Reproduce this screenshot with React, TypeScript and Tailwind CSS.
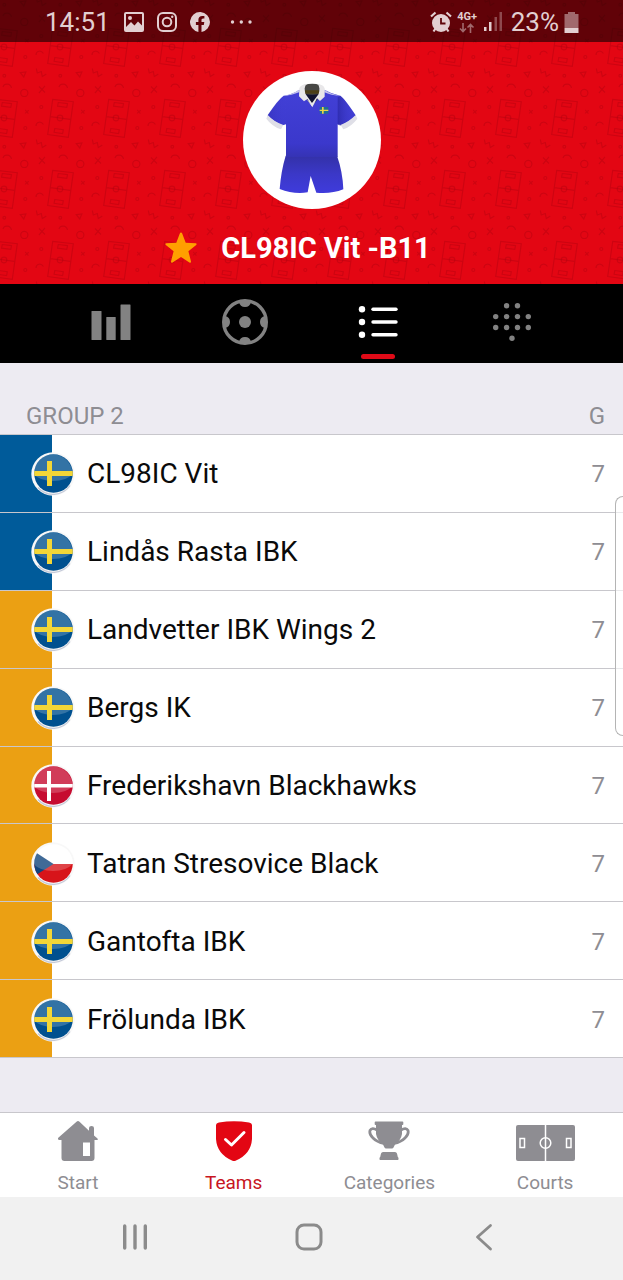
import React from 'react'

type Country = 'se' | 'dk' | 'cz'

const teams: { name: string; country: Country; games: number; qualified: boolean }[] = [
  { name: 'CL98IC Vit', country: 'se', games: 7, qualified: true },
  { name: 'Lindås Rasta IBK', country: 'se', games: 7, qualified: true },
  { name: 'Landvetter IBK Wings 2', country: 'se', games: 7, qualified: false },
  { name: 'Bergs IK', country: 'se', games: 7, qualified: false },
  { name: 'Frederikshavn Blackhawks', country: 'dk', games: 7, qualified: false },
  { name: 'Tatran Stresovice Black', country: 'cz', games: 7, qualified: false },
  { name: 'Gantofta IBK', country: 'se', games: 7, qualified: false },
  { name: 'Frölunda IBK', country: 'se', games: 7, qualified: false },
]

/* Header pattern, one tile is 56 x 71 */
const Doodles = () => (
  <g>
    <path d="M6.7 2.3 27.3 4.7 22.3 40.3 1.7 37.5zM4.3 19.7l20 2.6M12.3 5.5 21.5 6.600l-.7 3.700-9.200-1.100zM8.800 31.500l8.500 1.200-.7 3.800-8.500-1.200z" />
    <circle cx="14" cy="21" r="2.8" />
    <path d="m35.2 12.9 3.2 3.700M38.7 13.2l-3.700 3.2" />
    <circle cx="51.3" cy="10" r="1.5" />
    <path d="M46 29c0-4 5-5.5 7.400-1.500" />
    <circle cx="35.3" cy="31" r="1.5" />
    <path d="m30.3 46.7 5.500-.7-2 5z" />
    <path d="m46.3 42.5 1 4.500 4-1.500 1 5 4-2.500" />
    <circle cx="14.3" cy="49.7" r="1.4" />
    <path d="m49 60.500 6 6M55 59.800l-6 7.200" />
    <circle cx="34.3" cy="67" r="3.6" />
    <path d="M13 61c1-4 7.500-4 8.500 1" />
  </g>
)

const HeaderPattern = () => (
  <svg className="absolute inset-0 h-full w-full" aria-hidden="true">
    <defs>
      <pattern id="doodles" x="46" y="26" width="56" height="71" patternUnits="userSpaceOnUse">
        <g fill="none" stroke="#a8000c" strokeOpacity="0.36" strokeWidth="1.2">
          <Doodles />
          <g transform="translate(-56 0)">
            <Doodles />
          </g>
        </g>
      </pattern>
    </defs>
    <rect width="100%" height="100%" fill="url(#doodles)" />
  </svg>
)

const StatusBar = () => (
  <div className="relative flex h-[42px] items-center justify-between bg-[#0a0000]/60 pt-0.5 pr-11 pl-[45px] text-[#e2cfd1]">
    <div className="flex items-center">
      <span className="w-[65px] text-[26px] leading-8">14:51</span>
      <svg className="ml-[14px] h-5 w-5" viewBox="0 0 20 20" fill="currentColor" fillRule="evenodd">
        <path d="M2 0h16a2 2 0 0 1 2 2v16a2 2 0 0 1-2 2H2a2 2 0 0 1-2-2V2a2 2 0 0 1 2-2zm0 2v13l5-5 3.500 3.500L14 9.500l4 4V2zM6 4a2 2 0 1 1 0 4 2 2 0 0 1 0-4z" />
      </svg>
      <svg className="ml-[13px] h-5 w-5" viewBox="0 0 20 20" fill="none" stroke="currentColor" strokeWidth="2">
        <rect x="1" y="1" width="18" height="18" rx="5" />
        <circle cx="10" cy="10" r="4.3" />
        <circle cx="15.2" cy="4.8" r="1.2" fill="currentColor" stroke="none" />
      </svg>
      <svg className="ml-[13px] h-5 w-5" viewBox="0 0 20 20" fill="currentColor">
        <path d="M20 10A10 10 0 1 0 8.400 19.900v-7H5.900V10h2.500V7.800c0-2.500 1.500-3.900 3.800-3.900 1.100 0 2.200.2 2.200.2v2.500h-1.200c-1.300 0-1.700.8-1.700 1.600V10h2.800l-.5 2.900h-2.300v7A10 10 0 0 0 20 10z" />
      </svg>
      <svg className="ml-5 h-1 w-[23px]" viewBox="0 0 23 4" fill="currentColor">
        <circle cx="2.5" cy="2" r="1.7" />
        <circle cx="11.3" cy="2" r="1.7" />
        <circle cx="20" cy="2" r="1.7" />
      </svg>
    </div>
    <div className="flex items-center">
      <svg className="h-[22px] w-[22px]" viewBox="0 0 22 22" fill="none" stroke="currentColor" strokeWidth="2.2">
        <circle cx="11" cy="12" r="9" fill="currentColor" stroke="none" />
        <path d="M1 5.500 5.500 1.500M21 5.500 16.500 1.500M5.500 17.500 3.500 20.500M16.500 17.500l2 3" />
        <path d="M11 7v5.500h4.500" stroke="#5f0509" strokeWidth="1.8" />
      </svg>
      <span className="ml-1 flex w-[23px] flex-col items-center text-[11px] leading-3 font-bold">
        4G+
        <svg className="h-[10px] w-4 opacity-50" viewBox="0 0 16 10" fill="none" stroke="currentColor" strokeWidth="1.6">
          <path d="M4 0v8.500M1 5.500l3 3 3-3M11.500 10V1.500M8.500 4.500l3-3 3 3" />
        </svg>
      </span>
      <svg className="ml-1 h-5 w-5" viewBox="0 0 20 20" fill="currentColor">
        <path d="M1 15h2.500v4H1zM6 10h2.500v9H6z" />
        <path d="M11.500 5H14v14h-2.500zM16.500 0H19v19h-2.500z" opacity="0.35" />
      </svg>
      <span className="ml-2 text-[26px] leading-8">23%</span>
      <svg className="ml-[5px] h-[21px] w-[15px]" viewBox="0 0 15 21" fill="currentColor">
        <path d="M4 0h7v2h3.500v14H.5V2H4z" opacity="0.5" />
        <path d="M.5 16h14v5H.5z" />
      </svg>
    </div>
  </div>
)

const Kit = () => (
  <svg className="h-[138px] w-[138px]" viewBox="38 34 414 414" role="img" aria-label="Team kit">
    <defs>
      <linearGradient id="shirt" x1="0" y1="0" x2="0" y2="1">
        <stop offset="0" stopColor="#4240d6" />
        <stop offset="0.8" stopColor="#3b38cc" />
        <stop offset="1" stopColor="#3533b4" />
      </linearGradient>
      <linearGradient id="shorts" x1="0" y1="0" x2="0" y2="1">
        <stop offset="0" stopColor="#3331a8" />
        <stop offset="0.5" stopColor="#3b38c8" />
        <stop offset="1" stopColor="#3f3bdc" />
      </linearGradient>
      <linearGradient id="sleeve" x1="0" y1="0" x2="1" y2="0">
        <stop offset="0" stopColor="#25239d" stopOpacity="0.6" />
        <stop offset="1" stopColor="#4744dc" stopOpacity="0" />
      </linearGradient>
    </defs>
    <circle cx="245" cy="241" r="207" fill="#fff" />
    <path d="M166 288h154q17 48 19 101-38 15-81 10l-17-50-9 49q-43 6-84-10 4-53 18-100z" fill="url(#shorts)" />
    <path d="M160 108q28-4 47-18l38 50 37-50q20 12 48 18 12 8 47 60-20 19-45 28l-10-2v98H167v-98l-10 3q-26-9-45-30 32-48 48-59z" fill="url(#shirt)" />
    <path d="M322 113v82l10 3q25-11 44-32-34-50-46-57z" fill="url(#sleeve)" />
    <path d="m167 113 2 82-12 3q-26-12-45-32 34-50 46-57z" fill="url(#sleeve)" opacity="0.45" />
    <path d="M112 166q18 20 47 30l-7 13q-26-8-44-32zM376 166q-20 20-45 30l8 13q25-9 42-32z" fill="#dfdfe7" />
    <path d="M156 109q30-5 50-19v8q-20 9-50 11zM334 109q-32-5-52-19v8q18 9 52 11z" fill="#c3c2eb" />
    <path d="m222 85 4 30 20 23 23-28V85z" fill="#10112e" />
    <path d="M222 76q24-7 47 0l-2 27q-20 5-44 0z" fill="#474745" />
    <path d="M223 92h44v10h-43z" fill="#4b3f16" />
    <path d="M207 85q6-11 23-12-11 8-5 29l20 28 20-27q6-22-4-30 18 1 22 13v25l-14 13-9-8-14 27-15-25-10 7-15-15z" fill="#e8e7e9" />
    <path d="M268 142h26v20h-26z" fill="#1f6f92" />
    <path d="M275 142h5v20h-5zM268 150h26v4h-26z" fill="#ecd545" />
  </svg>
)

const shine = 'M2.500 22a19.500 19.500 0 0 1 39 0q-6 7-19.500 7T2.500 22z'

const Flag = ({ country }: { country: Country }) => (
  <svg className="relative -ml-[21px] h-11 w-11 shrink-0" viewBox="0 0 44 44" role="img" aria-label={country}>
    <defs>
      <clipPath id="round">
        <circle cx="22.5" cy="21.5" r="19.3" />
      </clipPath>
    </defs>
    <circle cx="22" cy="22" r="21.7" fill="#f8f8f8" />
    <path d="M7 35.500a20.300 20.300 0 0 0 32-2" fill="none" stroke="#c3c9d8" strokeWidth="1.3" />
    <g clipPath="url(#round)">
      {country === 'se' && (
        <>
          <path d="M2 2h41v41H2z" fill="#00508f" />
          <path d={shine} fill="#fff" opacity="0.2" />
          <path d="M16 9h5v25h-5zM2 19h41v5H2z" fill="#f3d637" />
        </>
      )}
      {country === 'dk' && (
        <>
          <path d="M2 2h41v41H2z" fill="#c60c30" />
          <path d={shine} fill="#fff" opacity="0.2" />
          <path d="M16 7h4v30h-4zM2 20h41v3.500H2z" fill="#fff" />
        </>
      )}
      {country === 'cz' && (
        <>
          <path d="M2 2h41v20H2z" fill="#fff" />
          <path d="M2 22h41v21H2z" fill="#d7141a" />
          <path d="M2 8.500 22.500 22 2 35z" fill="#11457e" />
          <path d={shine} fill="#fff" opacity="0.2" />
        </>
      )}
    </g>
  </svg>
)

const BarsIcon = () => (
  <svg className="h-9 w-10" viewBox="0 0 40 36" fill="currentColor">
    <rect x="0.5" y="7" width="10" height="29" rx="0.5" />
    <rect x="15.3" y="13" width="9.4" height="23" rx="0.5" />
    <rect x="29.5" y="0.5" width="10" height="35.5" rx="0.5" />
  </svg>
)

const BallIcon = () => (
  <svg className="h-[46px] w-[46px]" viewBox="0 0 46 46" fill="currentColor">
    <circle cx="23" cy="23" r="21.3" fill="none" stroke="currentColor" strokeWidth="3.4" />
    <circle cx="23" cy="23" r="6" />
    <path d="M17 3q1 5 6 5t6-5zM17 43q1-5 6-5t6 5zM3 17q5 1 5 6t-5 6zM43 17q-5 1-5 6t5 6z" />
  </svg>
)

const ListIcon = () => (
  <svg className="h-8 w-10" viewBox="0 0 40 32" fill="currentColor">
    {[3.2, 16, 28.8].map((y) => (
      <g key={y}>
        <circle cx="4" cy={y} r="3.2" />
        <path d={`M15 ${y}H38`} stroke="currentColor" strokeWidth="3.4" strokeLinecap="round" />
      </g>
    ))}
  </svg>
)

const dots = [
  [13.6, 2.7], [24.5, 2.7],
  [2.7, 13.6], [13.6, 13.6], [24.5, 13.6], [35.3, 13.6],
  [2.7, 24.5], [13.6, 24.5], [24.5, 24.5], [35.3, 24.5],
  [19, 35.3],
]

const DotsIcon = () => (
  <svg className="h-[38px] w-[38px]" viewBox="0 0 38 38" fill="currentColor">
    {dots.map(([x, y]) => (
      <circle key={`${x}-${y}`} cx={x} cy={y} r="2.7" />
    ))}
  </svg>
)

const HomeIcon = () => (
  <svg className="h-10 w-10" viewBox="0 0 40 40" fill="currentColor">
    <path fillRule="evenodd" d="M18.500.8q1.500-1.400 3 0l9.500 9V7q0-2 2.500-2t2.500 2v7.500l3.500 3q1 2-1.500 1.500h-1.500v18q0 3-3 3H6.500q-3 0-3-3V19H1.500q-2 0-1.500-2zM25 21.500V35h7V21.500z" />
  </svg>
)

const ShieldIcon = () => (
  <svg className="h-10 w-9" viewBox="0 0 36 40">
    <path d="M3 1.500Q18-1 33 1.500q3 .5 3 3V18q-1 15-16 21.500-2 1-4 0Q1 33 0 18V4.500q0-2.500 3-3z" fill="#e30613" />
    <path d="m9.500 18.500 6 5.500L28 11.500" fill="none" stroke="#fff" strokeWidth="3" strokeLinecap="round" strokeLinejoin="round" />
  </svg>
)

const TrophyIcon = () => (
  <svg className="h-10 w-[42px]" viewBox="0 0 42 40" fill="currentColor">
    <path d="M7.500.5h27q.8 0 .8.800v2q0 .8-.8.800H34v9q-1 6-7 10.500l-1.500 3q-.5.900-1.500.900h-6q-1 0-1.500-.900l-1.500-3Q9 19 8 13.100v-9h-.5q-.8 0-.8-.8v-2q0-.8.8-.8zM15 31h12q1.500 0 2 1.500l.8 3.500q.7.300.7 1.300v1q0 .7-.7.700H12.200q-.7 0-.7-.7v-1q0-1 .7-1.300l.8-3.500q.5-1.500 2-1.500z" />
    <path d="M9 9Q4 6 2 9.500q-1 4 3 7.500 4 4 11 5.500M33 9q5-3 7 .5 1 4-3 7.500-4 4-11 5.500" fill="none" stroke="currentColor" strokeWidth="2.8" />
  </svg>
)

const CourtIcon = () => (
  <svg className="h-9 w-[59px]" viewBox="0 0 59 36">
    <rect width="59" height="36" rx="2" fill="currentColor" />
    <g fill="none" stroke="#fff" strokeWidth="1.5">
      <path d="M29.500 0v36M4 13.500h4.500v9H4zM50.500 13.500H55v9h-4.500z" />
      <circle cx="29.5" cy="18" r="5.3" />
    </g>
  </svg>
)

const views = [
  { label: 'Statistics', icon: <BarsIcon /> },
  { label: 'Matches', icon: <BallIcon /> },
  { label: 'Table', icon: <ListIcon />, active: true },
  { label: 'More', icon: <DotsIcon /> },
]

const tabs = [
  { label: 'Start', icon: <HomeIcon /> },
  { label: 'Teams', icon: <ShieldIcon />, active: true },
  { label: 'Categories', icon: <TrophyIcon /> },
  { label: 'Courts', icon: <CourtIcon /> },
]

export default function App() {
  return (
    <div className="relative flex min-h-screen flex-col bg-[#edebf2] font-[Roboto,sans-serif]">
      <header className="relative bg-[#e30613]">
        <HeaderPattern />
        <StatusBar />
        <div className="relative flex h-[242px] flex-col items-center pt-[29px]">
          <Kit />
          <div className="mt-[21px] flex items-center gap-6 pr-[27px]">
            <button type="button" aria-label="Favourite">
              <svg className="h-8 w-8" viewBox="0 0 32 32" fill="#ff9f00">
                <path d="M16 .5q.8 0 1.200 1l3.500 9.200 10 .6q1.500.4.500 1.700l-7.800 6.200 2.600 10.300q0 1.800-1.600 1L16 25l-8.400 5.500q-1.600.8-1.600-1l2.600-10.300L.8 13q-1-1.300.5-1.700l10-.6 3.500-9.200q.4-1 1.200-1z" />
              </svg>
            </button>
            <h1 className="text-[29px] leading-9 font-bold text-white">CL98IC Vit -B11</h1>
          </div>
        </div>
      </header>

      {/* Team views */}
      <nav className="grid h-[79px] grid-cols-4 bg-black px-11">
        {views.map((view) => (
          <button
            key={view.label}
            type="button"
            aria-label={view.label}
            className={`relative flex items-center justify-center pb-1 ${view.active ? 'text-white' : 'text-[#828282]'}`}
          >
            {view.icon}
            {view.active && (
              <span className="absolute bottom-1 left-1/2 h-[5px] w-[34px] -translate-x-1/2 rounded-full bg-[#df0a17]" />
            )}
          </button>
        ))}
      </nav>

      <main className="flex-1">
        <table className="h-[695px] w-full border-separate border-spacing-0">
          <thead>
            <tr className="h-[72px] text-left text-2xl text-[#8e8d93]">
              <th colSpan={2} className="border-b border-[#c8c7cc] pt-[34px] pl-[26px] font-normal">
                GROUP 2
              </th>
              <th className="border-b border-[#c8c7cc] pt-[34px] pr-[18px] text-right font-normal">G</th>
            </tr>
          </thead>
          <tbody>
            {teams.map((team) => (
              <tr key={team.name} className="bg-white">
                <td className={`w-[52px] border-b border-[#c8c7cc] ${team.qualified ? 'bg-[#005b9a]' : 'bg-[#eba013]'}`} />
                <td className="border-b border-[#c8c7cc] pt-0.5">
                  <div className="flex items-center gap-3 text-[28px] leading-9 text-[#0a0a0a]">
                    <Flag country={team.country} />
                    {team.name}
                  </div>
                </td>
                <td className="border-b border-[#c8c7cc] pt-0.5 pr-[18px] text-right text-2xl text-[#8e8d93]">{team.games}</td>
              </tr>
            ))}
          </tbody>
        </table>
      </main>

      {/* Edge panel handle */}
      <div className="absolute top-[496px] right-0 h-60 w-2 rounded-l-lg border border-r-0 border-[#b4b4b4] bg-white/60" />

      <nav className="grid h-[85px] grid-cols-4 border-t border-[#c8c7cc] bg-white">
        {tabs.map((tab) => (
          <a
            key={tab.label}
            href="#"
            className={`flex flex-col items-center pt-2 text-[19px] leading-6 ${tab.active ? 'text-[#c81522]' : 'text-[#8e8d92]'}`}
          >
            <span className="flex h-10 items-end">{tab.icon}</span>
            <span className="mt-[10px]">{tab.label}</span>
          </a>
        ))}
      </nav>

      {/* System navigation */}
      <div className="grid h-[83px] grid-cols-3 bg-[#f1f1f1] pr-[53px] pb-[3px] pl-12 text-[#8b8b8b]">
        <button type="button" aria-label="Recent apps" className="flex items-center justify-center">
          <svg className="h-7 w-7" viewBox="0 0 28 28" fill="none" stroke="currentColor" strokeWidth="3.4" strokeLinecap="round">
            <path d="M3.700 3v22M14 3v22M24.300 3v22" />
          </svg>
        </button>
        <button type="button" aria-label="Home" className="flex items-center justify-center">
          <svg className="h-7 w-7" viewBox="0 0 28 28" fill="none" stroke="currentColor" strokeWidth="3">
            <rect x="2" y="2" width="24" height="24" rx="7" />
          </svg>
        </button>
        <button type="button" aria-label="Back" className="flex items-center justify-center">
          <svg className="h-7 w-7" viewBox="0 0 28 28" fill="none" stroke="currentColor" strokeWidth="2.8" strokeLinecap="round" strokeLinejoin="round">
            <path d="M21.500 2.500 8.500 14l13 12" />
          </svg>
        </button>
      </div>
    </div>
  )
}
